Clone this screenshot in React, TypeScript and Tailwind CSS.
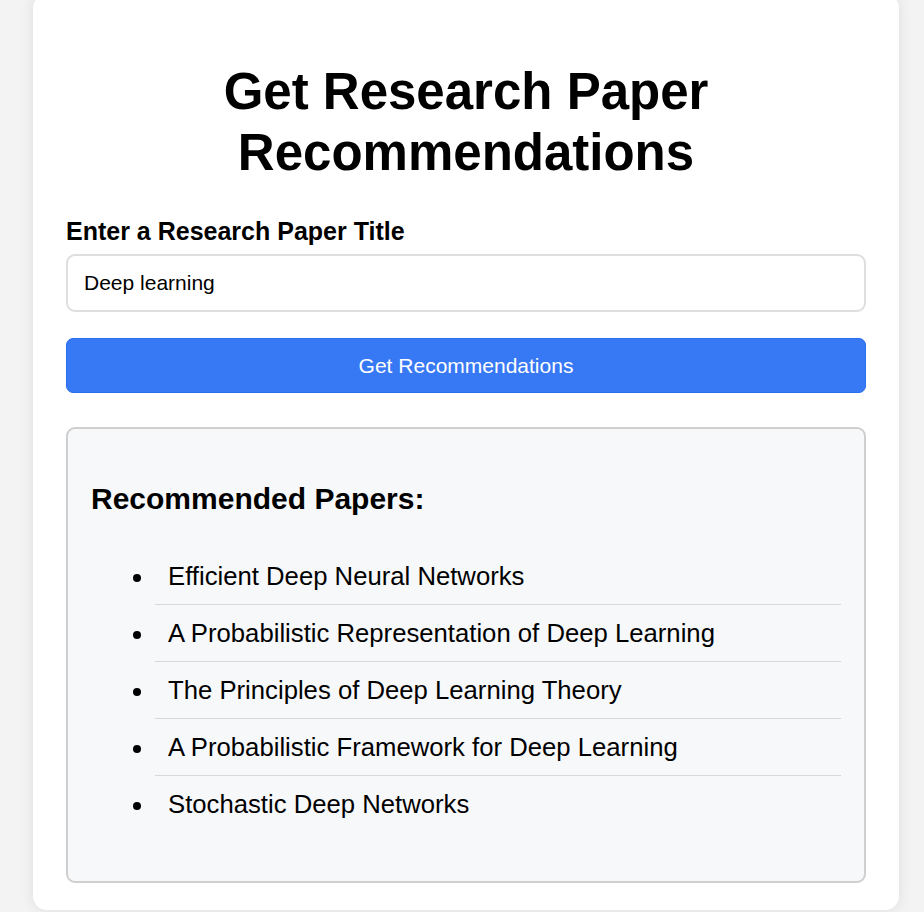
import { useState } from 'react';

const papers = [
  'Efficient Deep Neural Networks',
  'A Probabilistic Representation of Deep Learning',
  'The Principles of Deep Learning Theory',
  'A Probabilistic Framework for Deep Learning',
  'Stochastic Deep Networks',
];

export default function App() {
  const [title, setTitle] = useState('Deep learning');

  return (
    <div className="min-h-[912px] bg-[#f3f3f3] font-['Liberation_Sans',Arial,sans-serif] text-black overflow-hidden">
      <div className="ml-[33px] w-[866px] -mt-[6px] bg-white rounded-[14px] shadow-[0_0_14px_rgba(0,0,0,0.09)] px-[33px] pt-[67px] pb-[27px]">
        {/* Heading */}
        <h1 className="text-center text-[51px] leading-[61px] font-bold">
          Get Research Paper
          <br />
          Recommendations
        </h1>

        {/* Form */}
        <label htmlFor="title" className="block mt-[34px] text-[25px] leading-[29px] font-bold">
          Enter a Research Paper Title
        </label>
        <input
          id="title"
          type="text"
          value={title}
          onChange={(e) => setTitle(e.target.value)}
          className="mt-[8px] block w-full h-[58px] px-[16px] border-2 border-[#dedede] rounded-[9px] bg-white text-[21px] outline-none"
        />
        <button
          type="button"
          className="mt-[26px] w-full h-[55px] bg-[#3778f5] border border-[#2a6ff0] rounded-[7px] text-white text-[21px]"
        >
          Get Recommendations
        </button>

        {/* Results */}
        <div className="mt-[34px] bg-[#f7f8fa] border-2 border-[#cfcfcf] rounded-[9px] px-[23px] pt-[52px] pb-[49px]">
          <h3 className="text-[30px] leading-[35px] font-bold">Recommended Papers:</h3>
          <ul className="mt-[32px] pl-[64px] list-disc">
            {papers.map((p, i) => (
              <li
                key={p}
                className={
                  'pl-[13px] py-[13px] text-[25.7px] leading-[30px] ' +
                  (i < papers.length - 1 ? 'border-b border-[#d8d8d8]' : '')
                }
              >
                {p}
              </li>
            ))}
          </ul>
        </div>
      </div>
    </div>
  );
}
